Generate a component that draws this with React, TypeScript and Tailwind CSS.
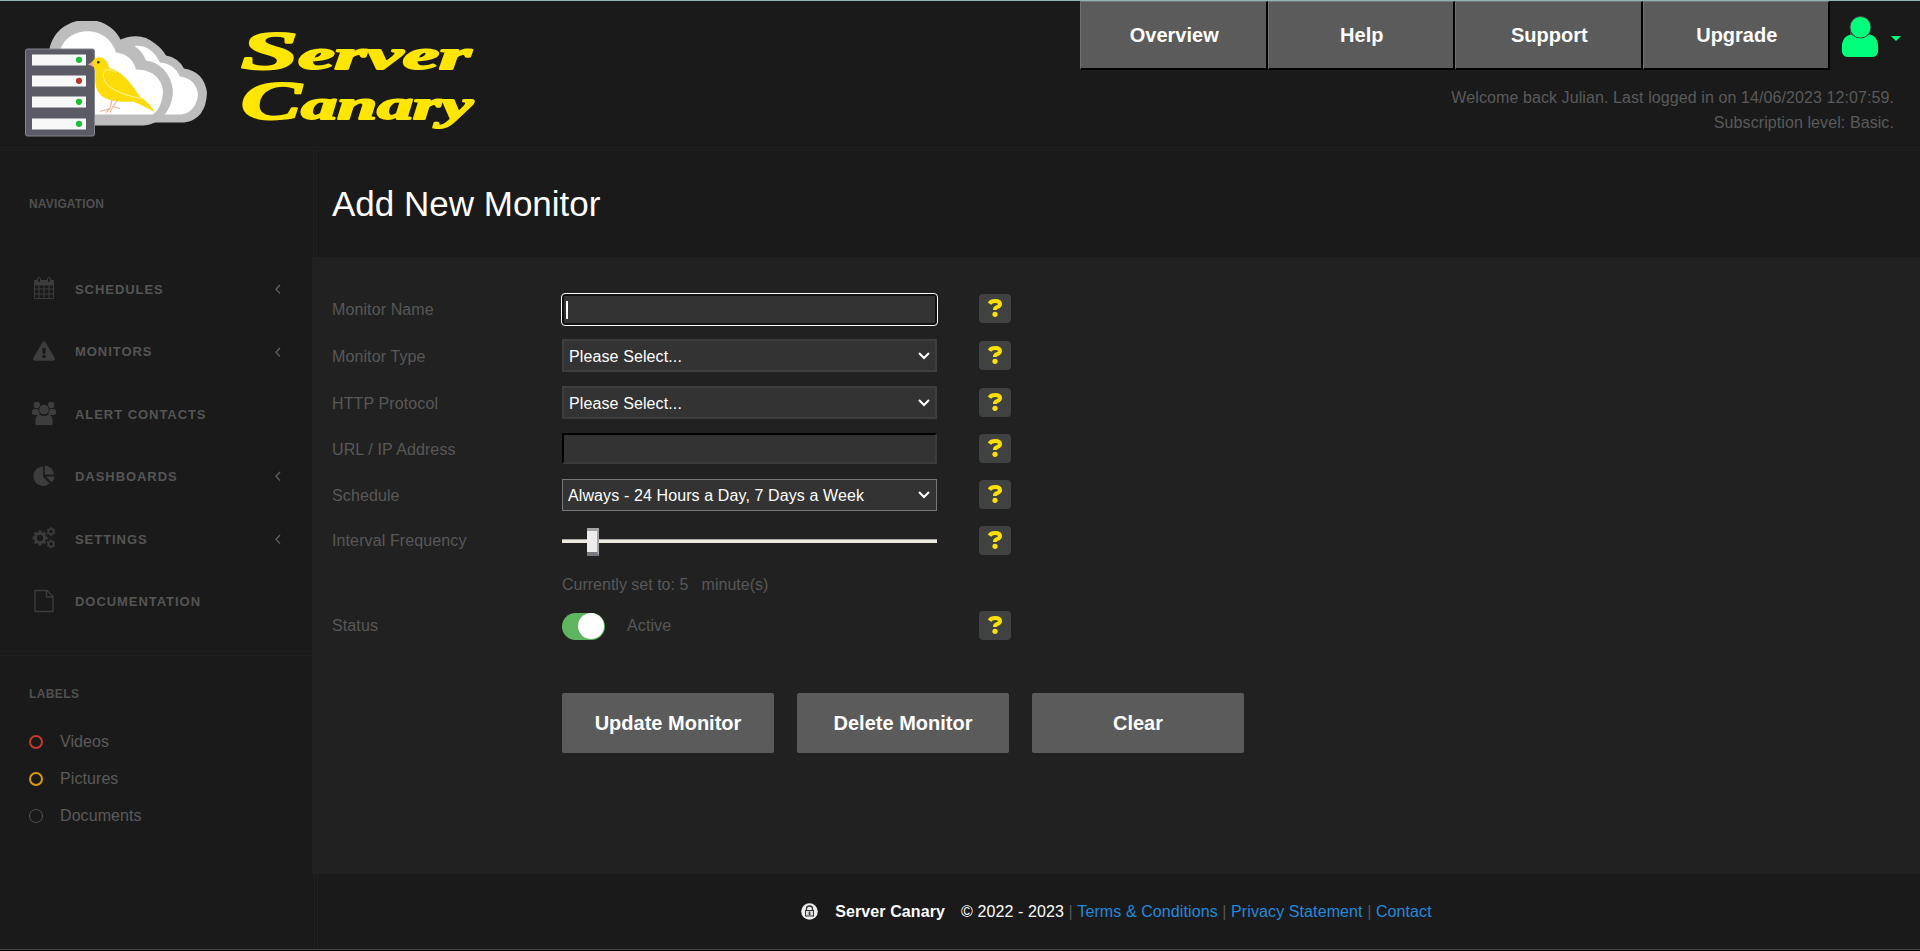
import React from "react";
import { FaExclamationTriangle } from "react-icons/fa";

const font = "font-['Liberation_Sans',Arial,sans-serif]";

function Logo() {
  return (
    <svg width="184" height="118" viewBox="0 0 184 118" className="shrink-0">
      <g transform="translate(-24,-20.500)">
        <path d="M118 122V40Q140 30 155 43Q162 48 166 55Q178 57 184 68Q204 71 207 92Q206 119 184 122Z" fill="#bdbdbd" />
        <path d="M131 46Q150 42 160 62Q174 63 180 76Q196 78 198 94Q196 111 182 114H150Z" fill="#fff" />
        <path d="M49 52C53 14 106 8 121 40C136 43 143 52 146 60C163 62 173 78 173 92C171 113 158 124 143 125H70Z" fill="#bdbdbd" />
        <path d="M60 50C68 24 108 24 116 52C127 53 134 60 136 69C154 69 163 80 163 92C162 105 157 111 153 114H85V50Z" fill="#fff" />
        <rect x="25.5" y="48.500" width="69" height="87" rx="2" fill="#5b5b66" stroke="#85858e" />
        {[[54, "#1abf35"], [75, "#b9352b"], [96, "#1abf35"], [118, "#1abf35"]].map(([y, c]) => (
          <g key={y}>
            <rect x="32" y={y} width="54" height="11" fill="#f8f8f8" />
            <circle cx="79" cy={Number(y) + 5.3} r="3.1" fill={c as string} />
          </g>
        ))}
        <path d="M94 60L88 64L95 67Z" fill="#e9a39a" />
        <path d="M92 62C95 54 107 55 109 67C124 72 131 83 140 96C147 101 152 106 155 112C149 108 141 104 133 101C121 102 103 101 98 91C93 83 97 74 94 67Z" fill="#fbdc08" />
        <path d="M104 71C100 84 115 93 142 98M104 71C106 68 112 69 116 72" fill="none" stroke="#fff4a4" strokeWidth="1" />
        <circle cx="98.3" cy="61.700" r="1.300" fill="#222" />
        <path d="M112 99L110 108L100 111M110 108L106 112M118 99L113 106L120 108M113 106L110 112" fill="none" stroke="#f0b49b" strokeWidth="1.200" />
      </g>
    </svg>
  );
}

function Wordmark() {
  return (
    <svg width="240" height="122" viewBox="0 0 240 122" className="shrink-0" fill="#ffe600" stroke="#ffe600" strokeWidth="2" strokeLinejoin="round" fontFamily="'Liberation Serif', serif" fontSize="43" fontWeight="700" fontStyle="italic">
      <text x="3" y="48" textLength="230" lengthAdjust="spacingAndGlyphs"><tspan fontSize="54">S</tspan>erver</text>
      <text x="3" y="98" textLength="232" lengthAdjust="spacingAndGlyphs"><tspan fontSize="54">C</tspan>anary</text>
    </svg>
  );
}

function UsersIcon() {
  return (
    <svg width="24" height="24" viewBox="0 0 24 24" fill="currentColor">
      <circle cx="4.800" cy="4" r="3.200" /><circle cx="19.200" cy="4" r="3.200" />
      <rect x="0" y="8" width="8" height="6" rx="2.500" /><rect x="16" y="8" width="8" height="6" rx="2.500" />
      <circle cx="12" cy="8.600" r="5.300" stroke="#1a1a1a" />
      <path d="M3.500 24V19Q3.500 14.500 7.500 13.500Q12 17 16.500 13.500Q20.500 14.500 20.500 19V24Z" />
    </svg>
  );
}

function CalendarIcon() {
  return (
    <svg width="22" height="23" viewBox="0 0 22 23" fill="none" stroke="currentColor">
      <path d="M1.500 3.500H20.500V21.500H1.500ZM1.500 12H20.500M1.500 17H20.500M6 8V21.500M11 8V21.500M16 8V21.500" />
      <path d="M1.500 3.500H20.500V8H1.500Z" fill="currentColor" />
      <rect x="4.500" y="0.500" width="3" height="5" rx="1.500" fill="#1a1a1a" /><rect x="14.500" y="0.500" width="3" height="5" rx="1.500" fill="#1a1a1a" />
    </svg>
  );
}

function PieIcon() {
  return (
    <svg width="22" height="22" viewBox="0 0 22 22" fill="currentColor">
      <path d="M10 1.500V11.500L16.500 18.500A9.700 9.700 0 1 1 10 1.500Z" />
      <path d="M11.700 0.500A9.500 9.500 0 0 1 21 9.500H11.700Z" />
      <path d="M13 11.500H21.500A9.500 9.500 0 0 1 18.800 17.500Z" />
    </svg>
  );
}

function Gear({ x, y, r, n, w }: { x: number; y: number; r: number; n: number; w: number }) {
  return (
    <g transform={`translate(${x},${y})`} stroke="currentColor" fill="none">
      <circle r={r} strokeWidth={w} />
      {Array.from({ length: n }, (_, i) => (
        <path key={i} d={`M0 ${-r - w / 3}V${-r - w / 2 - w * 0.55}`} strokeWidth={w} transform={`rotate(${(i * 360) / n})`} />
      ))}
    </g>
  );
}

function GearsIcon() {
  return (
    <svg width="24" height="22" viewBox="0 0 24 22">
      <Gear x={8} y={11} r={4.6} n={8} w={2.8} />
      <Gear x={19} y={4.6} r={2.7} n={6} w={1.6} />
      <Gear x={19} y={17} r={2.7} n={6} w={1.6} />
    </svg>
  );
}

function FileIcon() {
  return (
    <svg width="20" height="24" viewBox="0 0 20 24" fill="none" stroke="currentColor" strokeWidth="1.300">
      <path d="M1 1.500H13L19 7.500V22.500H1ZM12.500 1.500V8H19" />
    </svg>
  );
}

const nav = [
  { label: "SCHEDULES", icon: <CalendarIcon />, arrow: true },
  { label: "MONITORS", icon: <FaExclamationTriangle size={22} />, arrow: true },
  { label: "ALERT CONTACTS", icon: <UsersIcon />, arrow: false },
  { label: "DASHBOARDS", icon: <PieIcon />, arrow: true },
  { label: "SETTINGS", icon: <GearsIcon />, arrow: true },
  { label: "DOCUMENTATION", icon: <FileIcon />, arrow: false },
];

function Sidebar() {
  return (
    <aside className="flex w-[312px] shrink-0 flex-col bg-[#1a1a1a]">
      <div className="h-[501px] border-b border-[#202020]">
        <h2 className="pt-[45px] pl-[29px] text-[12px] leading-[16px] font-bold tracking-[0.150px] text-[#505050]">NAVIGATION</h2>
        <nav className="mt-[46px] flex flex-col">
          {nav.map((n) => (
            <a key={n.label} className="flex h-[62.400px] items-center pr-[30px] pl-[32px] text-[#3d3d3d]">
              <span className="-mt-px flex w-[24px] justify-center">{n.icon}</span>
              <span className="ml-[19px] flex-1 pt-px text-[13px] font-bold tracking-[0.950px] text-[#555]">{n.label}</span>
              {n.arrow && (
                <svg width="8" height="12" viewBox="0 0 8 12" fill="none" stroke="#606060" strokeWidth="1.300"><path d="M6 2L2 6.300L6 10.600" /></svg>
              )}
            </a>
          ))}
        </nav>
      </div>
      <div className="mt-[3px] flex-1 border-t border-[#202020] pl-[29px]">
        <h2 className="pt-[30px] text-[12px] leading-[16px] font-bold tracking-[0.400px] text-[#505050]">LABELS</h2>
        <ul className="mt-[21px] flex flex-col text-[16px] tracking-[0.080px] text-[#5a5a5a]">
          <li className="flex h-[37px] items-center gap-[17px]"><span className="size-[14px] rounded-full border-2 border-[#c53b2c]" />Videos</li>
          <li className="flex h-[37px] items-center gap-[17px]"><span className="size-[14px] rounded-full border-2 border-[#d99a0c]" />Pictures</li>
          <li className="flex h-[37px] items-center gap-[17px]"><span className="size-[14px] rounded-full border border-[#505050]" />Documents</li>
        </ul>
      </div>
    </aside>
  );
}

function HelpButton() {
  return (
    <button className="ml-[42px] flex h-[29px] w-[32px] items-center justify-center rounded-[4px] bg-[#404141]">
      <svg width="14" height="18" viewBox="0 0 14 18" className="-mt-px">
        <path d="M1.500 4.600Q3 2.100 7 2.100Q12 2.100 12 5Q12 7.200 9 8.100Q7 8.700 6.900 11" fill="none" stroke="#ffe100" strokeWidth="4" />
        <circle cx="7" cy="15.300" r="2.600" fill="#ffe100" />
      </svg>
    </button>
  );
}

function Select({ value, light }: { value: string; light?: boolean }) {
  return (
    <div className={`flex w-[375px] items-center justify-between bg-[#333] text-[16px] tracking-[0.110px] text-white ${light ? "mt-px h-[32px] border border-[#76767c] pr-[6px] pl-[5px]" : "h-[33px] border-2 border-[#3e3e3e] pr-[5px] pl-[5px]"}`}>
      <span className="pt-[2px]">{value}</span>
      <svg width="12" height="8" viewBox="0 0 12 8" fill="none" stroke="#fff" strokeWidth="2"><path d="M1 1L6 6L11 1" /></svg>
    </div>
  );
}

function Row({ label, className, children, help = true }: { label: string; className: string; children: React.ReactNode; help?: boolean }) {
  return (
    <div className={`flex items-center ${className}`}>
      <span className="w-[230px] pt-[2px] text-[16px] tracking-[0.110px] text-[#585858]">{label}</span>
      <div className="flex w-[375px] items-center">{children}</div>
      {help && <HelpButton />}
    </div>
  );
}

function Slider() {
  return (
    <div className="relative mt-px h-[4px] w-[375px] border-t border-[#aaa] bg-[#eeeae0]">
      <span className="absolute -top-[12px] left-[25px] h-[28px] w-[12px] border-t-[3px] border-r-2 border-b-[4px] border-[#a5a5a8] border-b-[#77777d] bg-[#ececec]" />
    </div>
  );
}

export default function App() {
  return (
    <div className={`flex h-[951px] w-[1920px] flex-col overflow-hidden border-t border-[#8bb5b3] bg-[#1a1a1a] ${font}`}>
      <header className="flex h-[147px] shrink-0 justify-between border-b border-[#202020]">
        <div className="flex h-[140px] pt-[20px] pl-[24px]">
          <Logo />
          <div className="ml-[30px]"><Wordmark /></div>
        </div>
        <div className="flex flex-col">
          <div className="flex h-[70px]">
            {["Overview", "Help", "Support", "Upgrade"].map((t) => (
              <button key={t} className="h-[69px] w-[187.500px] border-t border-r-2 border-b-2 border-l border-black border-t-[#777] border-l-[#707070] bg-[#5b5b5b] pl-[2px] text-[20px] font-bold text-white">{t}</button>
            ))}
            <div className="flex w-[90px] items-center pt-[2px] pl-[10px]">
              <svg width="40" height="42" viewBox="0 0 40 42" fill="#00ff7b">
                <path d="M10 12H30V24H10Z" fill="#4a4040" />
                <path d="M2 36C1 25 4 20 11 18.500Q20 25 30 18.500C36 20 39 25 38 36Q37 41 32 41H8Q3 41 2 36Z" />
                <ellipse cx="20.500" cy="11.300" rx="10.500" ry="10.800" stroke="#4a4040" strokeWidth="1" />
              </svg>
              <svg width="10" height="5" viewBox="0 0 10 5" className="mt-[2px] ml-[11px]" fill="#00ff7b"><path d="M0 0H10L5 5Z" /></svg>
            </div>
          </div>
          <div className="pt-[14px] pr-[26px] text-right text-[16px] leading-[25px] tracking-[0.090px] text-[#5a5a5a]">
            <p>Welcome back Julian. Last logged in on 14/06/2023 12:07:59.</p>
            <p>Subscription level: Basic.</p>
          </div>
        </div>
      </header>
      <div className="mt-[2px] h-px shrink-0 bg-[#202020]" />
      <div className="flex h-[798px] shrink-0">
        <Sidebar />
        <main className="flex flex-1 flex-col">
          <div className="flex h-[106px] pl-px">
            <div className="w-[4px] border-x border-[#202020]" />
            <h1 className="pt-[32px] pl-[15px] text-[35px] leading-[42px] text-white">Add New Monitor</h1>
          </div>
          <section className="flex h-[617px] flex-col bg-[#212121] pt-[28px] pl-[20px]">
            <Row label="Monitor Name" className="h-[47px]">
              <div className="mt-[2px] -ml-px flex h-[33px] w-[377px] shrink-0 items-center rounded-[4px] border border-white bg-[#111] p-[2px]">
                <div className="flex h-full flex-1 items-center bg-[#333] pl-[2px]"><span className="h-[18px] w-[2px] bg-white" /></div>
              </div>
            </Row>
            <Row label="Monitor Type" className="h-[47px]"><Select value="Please Select..." /></Row>
            <Row label="HTTP Protocol" className="h-[47px]"><Select value="Please Select..." /></Row>
            <Row label="URL / IP Address" className="h-[45px]">
              <div className="h-[31px] w-[375px] border-2 border-black border-r-[#3c3c3c] border-b-[#3c3c3c] bg-[#333]" />
            </Row>
            <Row label="Schedule" className="h-[47px]"><Select light value="Always - 24 Hours a Day, 7 Days a Week" /></Row>
            <Row label="Interval Frequency" className="h-[44px]"><Slider /></Row>
            <Row label="" help={false} className="h-[41px]"><span className="pt-[5px] text-[16px] whitespace-pre text-[#585858]">Currently set to: 5   minute(s)</span></Row>
            <Row label="Status" className="h-[44px]">
              <span className="mt-[2px] flex h-[27px] w-[43px] items-center justify-end rounded-full bg-[#5eb55f] pr-px"><span className="size-[26px] rounded-full bg-white" /></span>
              <span className="ml-[22px] pt-[2px] text-[16px] tracking-[0.110px] text-[#585858]">Active</span>
            </Row>
            <div className="mt-[46px] ml-[230px] flex gap-[23px]">
              {["Update Monitor", "Delete Monitor", "Clear"].map((t) => (
                <button key={t} className="h-[60px] w-[212px] rounded-[2px] bg-[#5b5b5b] text-[20px] font-bold text-white">{t}</button>
              ))}
            </div>
          </section>
          <footer className="flex flex-1 pl-[2px]">
            <div className="w-[4px] border-x border-[#202020]" />
            <div className="flex flex-1 items-center justify-center pr-[5px] text-[16px] tracking-[0.100px] text-white">
              <svg width="17" height="17" viewBox="0 0 17 17" className="mr-[17px]"><circle cx="8.500" cy="8.500" r="8.300" fill="#eee" /><path d="M5.500 8V5.500Q5.500 3 8.500 3Q11.500 3 11.500 5.500V8" fill="none" stroke="#333" strokeWidth="1.300" /><rect x="4.500" y="7.500" width="8" height="5.500" fill="#ddd" stroke="#333" /><path d="M8.500 8.500V12" stroke="#333" strokeWidth="1.500" /></svg>
              <b className="mr-[16px]">Server Canary</b>
              <span>© 2022 - 2023</span>
              <span className="px-[4.500px] text-[#555]">|</span>
              <a className="text-[#2389da]">Terms &amp; Conditions</a>
              <span className="px-[4.500px] text-[#555]">|</span>
              <a className="text-[#2389da]">Privacy Statement</a>
              <span className="px-[4.500px] text-[#555]">|</span>
              <a className="text-[#2389da]">Contact</a>
            </div>
          </footer>
        </main>
      </div>
      <div className="h-[2px] border-t border-[#444] bg-black" />
    </div>
  );
}
